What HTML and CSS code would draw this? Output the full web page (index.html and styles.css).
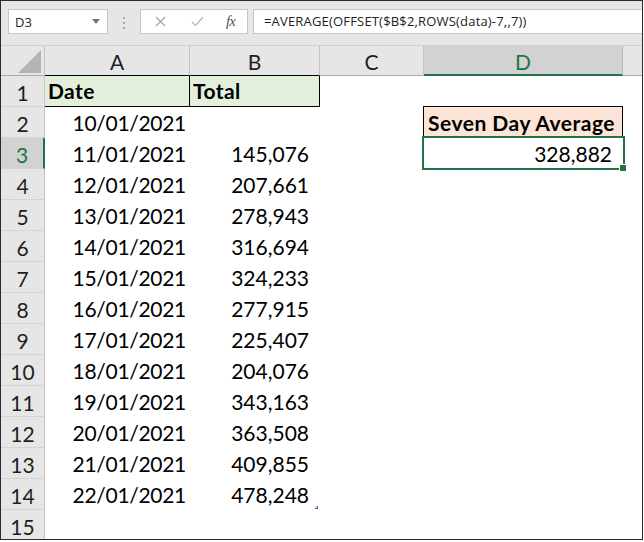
FILE: index.html
```html
<!DOCTYPE html>
<html>
<head>
<meta charset="utf-8">
<link rel="stylesheet" href="styles.css">
</head>
<body>
<div class="frame">
  <div class="toolbar">
    <div class="namebox">
      <span class="nb-text">D3</span>
      <svg class="nb-arrow" width="8" height="5" viewBox="0 0 8 5"><path d="M0 0H8L4 5Z" fill="#777"/></svg>
    </div>
    <svg class="grip" width="3" height="12" viewBox="0 0 3 12"><rect x="0" y="0" width="2" height="2" fill="#a8a8a8"/><rect x="0" y="5" width="2" height="2" fill="#a8a8a8"/><rect x="0" y="10" width="2" height="2" fill="#a8a8a8"/></svg>
    <div class="fbuttons">
      <svg class="btn-x" width="11" height="11" viewBox="0 0 11 11"><path d="M1 1L10 10M10 1L1 10" stroke="#a6a6a6" stroke-width="1.3"/></svg>
      <svg class="btn-ok" width="13" height="11" viewBox="0 0 13 11"><path d="M1 6L4.5 9.5L12 1" stroke="#bdbdbd" stroke-width="1.5" fill="none"/></svg>
      <span class="btn-fx">fx</span>
    </div>
    <div class="formula">=AVERAGE(OFFSET($B$2,ROWS(data)-7,,7))</div>
  </div>
  <div class="sheet">
    <div class="corner"><span class="tri"></span></div>
    <div class="ch ch-dark">A</div>
    <div class="ch ch-dark">B</div>
    <div class="ch">C</div>
    <div class="ch ch-sel">D</div>
    <div class="ch ch-rest"></div>

    <div class="rh">1</div><div class="c hdr-a">Date</div><div class="c hdr-b">Total</div><div class="c"></div><div class="c"></div><div class="c"></div>
    <div class="rh">2</div><div class="c num date">10/01/2021</div><div class="c"></div><div class="c"></div><div class="c label">Seven Day Average</div><div class="c"></div>
    <div class="rh rh-sel">3</div><div class="c num date">11/01/2021</div><div class="c num tot">145,076</div><div class="c"></div><div class="c num tot active">328,882</div><div class="c"></div>
    <div class="rh">4</div><div class="c num date">12/01/2021</div><div class="c num tot">207,661</div><div class="c"></div><div class="c"></div><div class="c"></div>
    <div class="rh">5</div><div class="c num date">13/01/2021</div><div class="c num tot">278,943</div><div class="c"></div><div class="c"></div><div class="c"></div>
    <div class="rh">6</div><div class="c num date">14/01/2021</div><div class="c num tot">316,694</div><div class="c"></div><div class="c"></div><div class="c"></div>
    <div class="rh">7</div><div class="c num date">15/01/2021</div><div class="c num tot">324,233</div><div class="c"></div><div class="c"></div><div class="c"></div>
    <div class="rh">8</div><div class="c num date">16/01/2021</div><div class="c num tot">277,915</div><div class="c"></div><div class="c"></div><div class="c"></div>
    <div class="rh">9</div><div class="c num date">17/01/2021</div><div class="c num tot">225,407</div><div class="c"></div><div class="c"></div><div class="c"></div>
    <div class="rh">10</div><div class="c num date">18/01/2021</div><div class="c num tot">204,076</div><div class="c"></div><div class="c"></div><div class="c"></div>
    <div class="rh">11</div><div class="c num date">19/01/2021</div><div class="c num tot">343,163</div><div class="c"></div><div class="c"></div><div class="c"></div>
    <div class="rh">12</div><div class="c num date">20/01/2021</div><div class="c num tot">363,508</div><div class="c"></div><div class="c"></div><div class="c"></div>
    <div class="rh">13</div><div class="c num date">21/01/2021</div><div class="c num tot">409,855</div><div class="c"></div><div class="c"></div><div class="c"></div>
    <div class="rh">14</div><div class="c num date">22/01/2021</div><div class="c num tot table-end">478,248</div><div class="c"></div><div class="c"></div><div class="c"></div>
    <div class="rh">15</div><div class="c"></div><div class="c"></div><div class="c"></div><div class="c"></div><div class="c"></div>
  </div>
</div>
</body>
</html>
```
FILE: styles.css
```css
* { box-sizing: border-box; }
html, body { margin: 0; padding: 0; background: #ffffff; }
.frame {
  width: 643px;
  height: 540px;
  border: 1px solid #2b2b2b;
  overflow: hidden;
  background: #e6e6e6;
  display: flex;
  flex-direction: column;
}
.toolbar {
  height: 44px;
  flex: none;
  display: flex;
  align-items: flex-start;
  padding: 8px 0 0 7px;
  font-family: "Open Sans", "Noto Sans", sans-serif;
  font-size: 13px;
  color: #222;
}
.namebox {
  width: 100px;
  height: 25px;
  background: #fff;
  border: 1px solid #c8c8c8;
  display: flex;
  align-items: center;
  justify-content: space-between;
  padding: 0 7px 0 6px;
}
.nb-text { line-height: 20px; }
.nb-arrow { margin-top: -1px; }
.grip { margin: 8px 0 0 15px; }
.fbuttons {
  margin-left: 14px;
  width: 108px;
  height: 25px;
  background: #fff;
  border: 1px solid #c8c8c8;
  display: flex;
  align-items: center;
  padding-left: 14px;
}
.btn-ok { margin-left: 25px; }
.btn-fx {
  margin-left: 22px;
  font-family: "Liberation Serif", "DejaVu Serif", serif;
  font-style: italic;
  font-size: 15px;
  color: #555;
  letter-spacing: -1px;
}
.formula {
  margin-left: 5px;
  flex: 1;
  height: 25px;
  background: #fff;
  border: 1px solid #c8c8c8;
  border-right: none;
  padding-left: 10px;
  line-height: 22px;
  white-space: nowrap;
  letter-spacing: 0.18px;
}
.sheet {
  flex: none;
  display: grid;
  grid-template-columns: 44px 145px 130px 104px 199px 1fr;
  grid-template-rows: repeat(16, 31px);
  background: #fff;
  font-family: "Lato", "Open Sans", sans-serif;
  font-size: 21px;
  color: #000;
}
.corner {
  background: #e6e6e6;
  border-top: 1px solid #d0d0d0;
  border-right: 1px solid #c4c4c4;
  border-bottom: 1px solid #ababab;
  display: flex;
  align-items: flex-end;
  justify-content: flex-end;
  padding: 0 3px 2px 0;
}
.tri {
  width: 23px;
  height: 23px;
  background: #b4b4b4;
  clip-path: polygon(100% 0, 100% 100%, 0 100%);
}
.ch {
  background: #e6e6e6;
  border-top: 1px solid #d0d0d0;
  border-right: 1px solid #c4c4c4;
  border-bottom: 1px solid #ababab;
  display: flex;
  align-items: center;
  justify-content: center;
  color: #1f1f1f;
  padding-top: 2px;
}
.ch-dark { border-bottom-color: #000; }
.ch-sel {
  background: #d2d2d2;
  color: #217346;
  border-bottom: 2px solid #217346;
  border-right-color: #bdbdbd;
}
.ch-rest { border-right: none; }
.rh {
  background: #e6e6e6;
  border-right: 1px solid #c4c4c4;
  border-bottom: 1px solid #d4d4d4;
  display: flex;
  align-items: center;
  justify-content: center;
  color: #1f1f1f;
  padding-top: 3px;
}
.rh-sel {
  background: #d2d2d2;
  color: #217346;
  border-right: 2px solid #217346;
}
.c {
  display: flex;
  align-items: flex-end;
  padding: 0 4px 3px 4px;
  line-height: 24px;
  white-space: nowrap;
}
.num { justify-content: flex-end; }
.date { letter-spacing: -0.3px; }
.tot { padding-right: 11px; }
.hdr-a, .hdr-b {
  background: #e2efda;
  border-right: 1px solid #000;
  border-bottom: 1px solid #000;
  font-weight: bold;
  padding-left: 3px;
  letter-spacing: 0.4px;
}
.label {
  background: #fce4d6;
  border-right: 1px solid #000;
  box-shadow: -1px -1px 0 0 #000, 0 -1px 0 0 #000;
  font-weight: bold;
  padding-left: 4px;
  letter-spacing: 0.5px;
}
.active { position: relative; }
.active::after {
  content: "";
  position: absolute;
  top: -2px;
  left: -2px;
  right: -2px;
  bottom: -1px;
  border: 2px solid #217346;
}
.active::before {
  content: "";
  position: absolute;
  right: -4px;
  bottom: -3px;
  width: 6px;
  height: 6px;
  background: #217346;
  border: 1px solid #fff;
  z-index: 1;
}
.table-end { position: relative; }
.table-end::after {
  content: "";
  position: absolute;
  right: 2px;
  bottom: 1px;
  width: 3px;
  height: 3px;
  background: #5e5ea6;
  clip-path: polygon(100% 0, 100% 100%, 0 100%, 0 60%, 60% 60%, 60% 0);
}
```
